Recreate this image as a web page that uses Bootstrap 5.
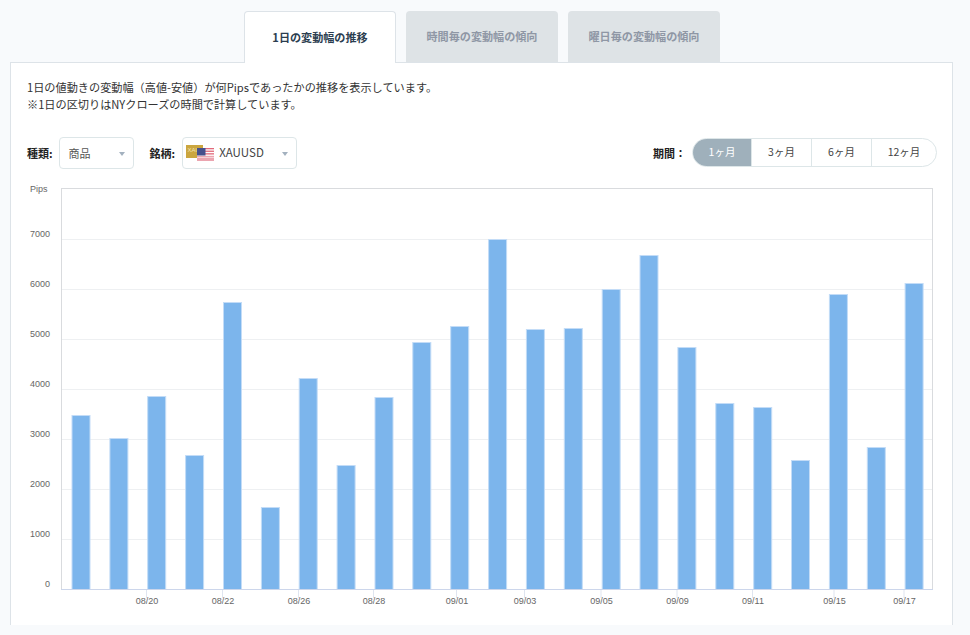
<!DOCTYPE html>
<html lang="ja"><head><meta charset="utf-8">
<link href="https://cdn.jsdelivr.net/npm/bootstrap@5.3.0/dist/css/bootstrap.min.css" rel="stylesheet">
<style>
html,body{height:635px;overflow:hidden}
body{background:#f8fafc;font-family:"Noto Sans CJK JP","Noto Sans",sans-serif;color:#333;font-size:11px;padding:11px 17px 0 10px}
.tabbar{padding-left:234px;gap:10px;height:52px;margin-bottom:-1px;position:relative;z-index:1}
.tabitem{width:152px;height:51px;background:#dee3e6;border-radius:4px 4px 0 0;color:#8f97a5;font-weight:700;font-size:11.1px}
.tabitem.on{background:#fff;border:1px solid #dde3e8;border-bottom:0;height:52px;color:#2c3e50}
.panel{background:#fff;border:1px solid #dde3e8;border-bottom:0;height:563px;padding:16px 15px 0 16px}
.desc{line-height:17px;font-size:11.17px;margin:0 0 24px;color:#333}
.ctl{height:32px;margin-bottom:9px}
.lbl{font-weight:700;font-size:11px;color:#222}
.pick{height:32px;border:1px solid #dde6e8;border-radius:4px;background:#fff;font-size:11px;color:#555;position:relative}
.pick::after{content:"";position:absolute;right:8px;top:14px;border:3px solid transparent;border-top:4px solid #a3b1bf;border-bottom:0}
.pick1{width:75px;margin:0 16px 0 6px;padding-left:9px}
.pick2{width:115px;margin-left:7px;padding-left:3px;font-size:11.5px;color:#444}
.flags{width:31px;height:16px;margin-right:2px;flex:none}
.periods{height:29px;border:1px solid #dde6e8;border-radius:15px;width:245px;margin:0 0 2px 6px;overflow:hidden}
.periods>div{width:60px;border-right:1px solid #dde6e8;font-size:10.5px;color:#444}
.periods>div.cur{width:59px;background:#9fb0bb;color:#fff}
.periods>div:last-child{flex:1;border-right:0}
.chartbox{margin-left:-16px}
.chartbox svg{display:block}
.chartbox text{font-family:"Liberation Sans",Arial,sans-serif;font-size:9px;fill:#666}
</style></head><body>
<div class="tabbar d-flex">
<div class="tabitem on d-flex align-items-center justify-content-center">1日の変動幅の推移</div>
<div class="tabitem d-flex align-items-center justify-content-center">時間毎の変動幅の傾向</div>
<div class="tabitem d-flex align-items-center justify-content-center">曜日毎の変動幅の傾向</div>
</div>
<div class="panel">
<p class="desc">1日の値動きの変動幅（高値-安値）が何Pipsであったかの推移を表示しています。<br>※1日の区切りはNYクローズの時間で計算しています。</p>
<div class="ctl d-flex align-items-center">
<span class="lbl">種類:</span>
<div class="pick pick1 d-flex align-items-center">商品</div>
<span class="lbl">銘柄:</span>
<div class="pick pick2 d-flex align-items-center">
<svg class="flags" viewBox="0 0 31 16"><rect x="0" y="0" width="17" height="13" fill="#cba63f"/><text x="1.5" y="7" style="font:6px 'Liberation Sans',sans-serif;fill:#f3e3b0">XAU</text>
<rect x="11" y="3" width="17" height="13" fill="#fff"/><g fill="#e2697a"><rect x="11" y="3" width="17" height="1.3"/><rect x="11" y="5.6" width="17" height="1.3"/><rect x="11" y="8.2" width="17" height="1.3"/><rect x="11" y="10.8" width="17" height="1.7" fill="#eba5b0"/><rect x="11" y="13" width="17" height="3" fill="#eba5b0"/></g><rect x="11" y="3" width="8.5" height="7.5" fill="#46508c"/></svg>
XAUUSD</div>
<div class="ms-auto d-flex align-items-center">
<span class="lbl">期間：</span>
<div class="periods d-flex">
<div class="cur d-flex align-items-center justify-content-center">1ヶ月</div>
<div class="d-flex align-items-center justify-content-center">3ヶ月</div>
<div class="d-flex align-items-center justify-content-center">6ヶ月</div>
<div class="d-flex align-items-center justify-content-center">12ヶ月</div>
</div></div></div>
<div class="chartbox">
<svg id="c" width="926" height="440" viewBox="11 178 926 440" xmlns="http://www.w3.org/2000/svg"></svg>
</div>
</div>
<script>
var s='',tops=[415,438,396,455,302,507,378,465,397,342,326,239,329,328,289,255,347,403,407,460,294,447,283];
s+='<rect x="61.5" y="188.5" width="871" height="401" fill="#fff" stroke="#d9dbde"/>';
for(var v=1;v<=7;v++){var y=589.5-50*v;s+='<line x1="62" x2="932" y1="'+y+'" y2="'+y+'" stroke="#eef0f2"/>';}
for(v=0;v<=7;v++){s+='<text x="50" y="'+(587-50*v)+'" text-anchor="end">'+(v?v*1000:0)+'</text>';}
s+='<text x="30" y="192">Pips</text>';
tops.forEach(function(t,i){var x=72+i*37.87;s+='<rect x="'+x.toFixed(1)+'" y="'+t+'.5" width="18" height="'+(589-t)+'" fill="#7cb5ec" stroke="#c3dcf7" stroke-width="1"/>';});
s+='<line x1="61" x2="933" y1="589.5" y2="589.5" stroke="#ccd6eb"/>';
[[146.5,'08/20'],[222.5,'08/22'],[298.5,'08/26'],[373.5,'08/28'],[456.5,'09/01'],[524.5,'09/03'],[601,'09/05'],[677,'09/09'],[752.5,'09/11'],[834,'09/15'],[904,'09/17']].forEach(function(a){
s+='<line x1="'+a[0]+'" x2="'+a[0]+'" y1="590" y2="598" stroke="#dfe5f0"/><text x="'+(a[0]+0.5)+'" y="604" text-anchor="middle">'+a[1]+'</text>';});
document.getElementById('c').innerHTML=s;
</script>
<script src="https://cdn.jsdelivr.net/npm/bootstrap@5.3.0/dist/js/bootstrap.bundle.min.js"></script>
</body></html>
